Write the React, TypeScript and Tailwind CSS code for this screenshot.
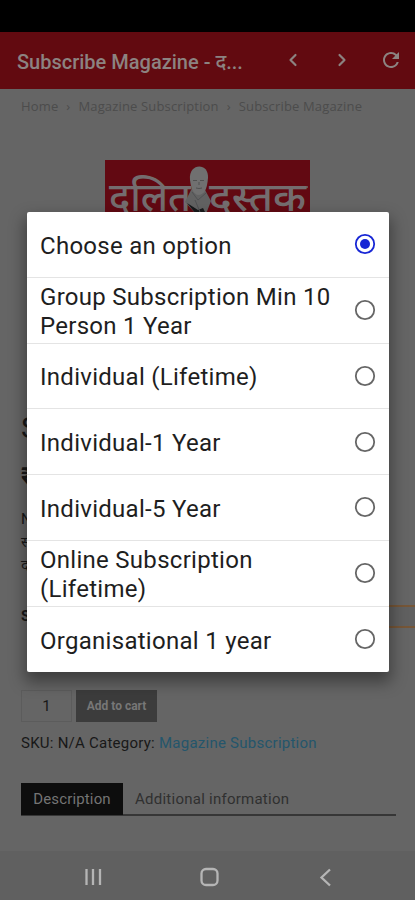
import { ChevronLeft, ChevronRight } from 'lucide-react';
import { MdRefresh } from 'react-icons/md';

const options = [
  'Choose an option',
  'Group Subscription Min 10 Person 1 Year',
  'Individual (Lifetime)',
  'Individual-1 Year',
  'Individual-5 Year',
  'Online Subscription (Lifetime)',
  'Organisational 1 year',
];

const Header = () => (
  <div className="flex h-[57px] items-center bg-[#620a10] pt-[3px] text-[#8c8381]">
    <h1 className="ml-[17px] w-[266px] whitespace-nowrap text-[20px] font-medium">
      Subscribe Magazine - द...
    </h1>
    <ChevronLeft size={20} strokeWidth={2.6} className="-mt-1" />
    <ChevronRight size={20} strokeWidth={2.6} className="-mt-1 ml-[29px]" />
    <MdRefresh size={24} className="-mt-1 ml-[27px]" />
  </div>
);

const Logo = () => (
  <div className="relative mx-auto h-[80px] w-[205px] overflow-hidden bg-[#620912]">
    <svg width="205" height="80" viewBox="0 0 205 80">
      <path d="M5 27H84M105 27H203" stroke="#716467" strokeWidth="1.5" />
      <text x="4" y="51" fontSize="40" fontWeight="500" textLength="82" lengthAdjust="spacingAndGlyphs" fill="#746d6f">
        दलित
      </text>
      <text x="104" y="51" fontSize="40" fontWeight="500" textLength="97" lengthAdjust="spacingAndGlyphs" fill="#746d6f">
        दस्तक
      </text>
      {/* Portrait between the two words */}
      <path d="M80 42L87 28H99L106 41L101 54H91Z" fill="#626262" />
      <path d="M82 43L91 54H101L98 48L93 50Z" fill="#18191b" />
      <path d="M85 20C83 3 104 2 103 18C102 30 99 35 93 35C88 34 86 28 85 20Z" fill="#707070" />
      <path d="M88 20.5H92M95 20.5H99M94 22V25M91 28Q94 29 97 28" stroke="#505050" fill="none" />
      <path d="M87 32L93 40L101 33M90 40L95 52" stroke="#505153" fill="none" />
    </svg>
  </div>
);

const Product = () => (
  <div className="flex h-[762px] flex-col bg-[#656565] text-[#181818]">
    <div className="flex h-[71px] pl-[21px] pt-[8px] font-['Open_Sans'] text-[13px] leading-[18px] tracking-[0.16px] text-[#4c4c4c]">
      <span>Home</span>
      <span className="w-[20px] text-center">›</span>
      <span>Magazine Subscription</span>
      <span className="w-[20px] text-center">›</span>
      <span>Subscribe Magazine</span>
    </div>
    <Logo />
    <div className="mt-[169px] h-[37px] pl-[21px] text-[30px] leading-[37px]">S</div>
    <div className="mt-[12px] h-[38px] pl-[21px] text-[25px] font-bold leading-[38px]">₹</div>
    <div className="mt-[12px] pl-[21px] text-[15px] leading-[23px]">
      <p>N</p>
      <p>स</p>
      <p>द</p>
    </div>
    <div className="mt-[28px] flex h-[23px] items-center pl-[21px]">
      <span className="w-[80px] text-[15px] font-bold">S</span>
      <div className="h-[23px] flex-1 border-y-2 border-[#765637] bg-[#606060]" />
    </div>
    <div className="mt-[62px] flex h-[32px] gap-[4px] pl-[21px]">
      <div className="flex w-[51px] items-center justify-center border border-[#5c5c5c] text-[15px]">1</div>
      <div className="flex w-[81px] items-center justify-center bg-[#3c3c3c] text-[12px] font-bold text-[#777]">
        Add to cart
      </div>
    </div>
    <div className="mt-[11px] pl-[21px] text-[15px] leading-[20px] tracking-[0.25px]">
      SKU: N/A Category: <span className="text-[#24566c]">Magazine Subscription</span>
    </div>
    <div className="ml-[21px] mr-[19px] mt-[31px] flex h-[32px] items-center border-b-2 border-[#363636] text-[15px]">
      <div className="flex h-[32px] w-[102px] items-center justify-center bg-[#0d0d0d] tracking-[0.15px] text-[#747474]">
        Description
      </div>
      <div className="ml-3 tracking-[0.25px] text-[#303030]">Additional information</div>
    </div>
  </div>
);

const SystemNav = () => (
  <div className="flex h-[50px] items-center bg-[#606060]">
    <svg width="415" height="50" viewBox="0 0 415 50" fill="none" stroke="#b5b5b5" strokeWidth="2.3">
      <path d="M86.5 18V34M93 18V34M100 18V34" />
      <rect x="201.5" y="18" width="16" height="16" rx="4.5" />
      <path d="M330 18.5L321.5 26.5L330 34.5" />
    </svg>
  </div>
);

const Dialog = () => (
  <div className="absolute left-[27px] top-[212px] h-[460px] w-[362px] rounded-[2px] bg-white shadow-[0_8px_16px_2px_rgba(0,0,0,0.4)]">
    {options.map((option, i) => (
      <div
        key={option}
        className="flex h-[65.75px] items-center justify-between border-b border-[#e4e4e4] pl-[13px] pr-[13px] last:border-b-0"
      >
        <span className="w-[296px] pt-[3px] text-[24px] leading-[28.5px] tracking-[0.28px] text-[#1e1e1e]">{option}</span>
        <svg width="22" height="22" viewBox="0 0 22 22" fill="none">
          <circle cx="11" cy="11" r="9.2" stroke={i === 0 ? '#1726d5' : '#666'} strokeWidth="1.8" />
          {i === 0 && <circle cx="11" cy="11" r="5" fill="#1726d5" />}
        </svg>
      </div>
    ))}
  </div>
);

const App = () => {
  return (
    <div className="relative h-[900px] w-[415px] overflow-hidden bg-black font-[Roboto,'Noto_Sans',sans-serif]">
      <div className="h-8 bg-black" />
      <Header />
      <Product />
      <SystemNav />
      <Dialog />
    </div>
  );
};

export default App;
